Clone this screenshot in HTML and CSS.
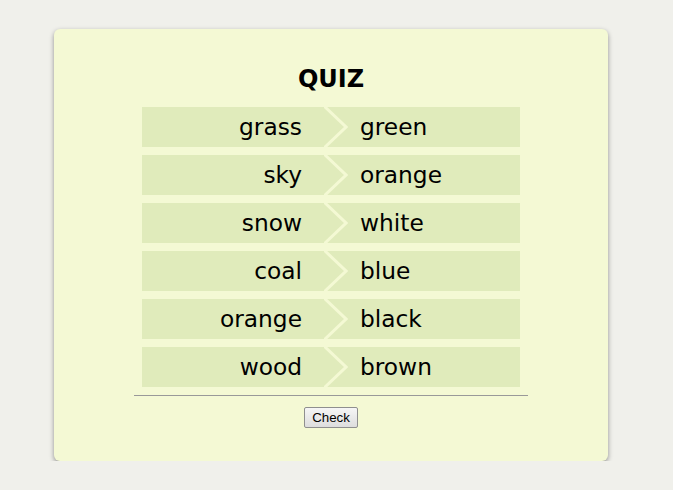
FILE: index.html
```html
<!DOCTYPE html>
<html>
<head>
<meta charset="utf-8">
<link rel="stylesheet" href="styles.css">
</head>
<body>
<div class="card">
  <h1 class="title">QUIZ</h1>
  <div class="rows">
    <div class="row"><span class="left">grass</span><svg class="chev" width="24" height="40" viewBox="0 0 24 40"><polyline points="0,-1 22,20 0,41" /></svg><span class="right">green</span></div>
    <div class="row"><span class="left">sky</span><svg class="chev" width="24" height="40" viewBox="0 0 24 40"><polyline points="0,-1 22,20 0,41" /></svg><span class="right">orange</span></div>
    <div class="row"><span class="left">snow</span><svg class="chev" width="24" height="40" viewBox="0 0 24 40"><polyline points="0,-1 22,20 0,41" /></svg><span class="right">white</span></div>
    <div class="row"><span class="left">coal</span><svg class="chev" width="24" height="40" viewBox="0 0 24 40"><polyline points="0,-1 22,20 0,41" /></svg><span class="right">blue</span></div>
    <div class="row"><span class="left">orange</span><svg class="chev" width="24" height="40" viewBox="0 0 24 40"><polyline points="0,-1 22,20 0,41" /></svg><span class="right">black</span></div>
    <div class="row"><span class="left">wood</span><svg class="chev" width="24" height="40" viewBox="0 0 24 40"><polyline points="0,-1 22,20 0,41" /></svg><span class="right">brown</span></div>
  </div>
  <hr class="rule">
  <div class="actions"><button class="check">Check</button></div>
</div>
</body>
</html>
```
FILE: styles.css
```css
html, body {
  margin: 0;
  padding: 0;
  background: #f0f0eb;
}
body {
  padding: 29px 0 0 54px;
  font-family: "DejaVu Sans", sans-serif;
}
.card {
  width: 554px;
  height: 432px;
  box-sizing: border-box;
  background: #f4f9d4;
  border-radius: 6px;
  box-shadow: 0 2px 5px rgba(0, 0, 0, 0.4);
  padding-top: 35px;
}
.title {
  margin: 0;
  font-size: 24px;
  font-weight: bold;
  line-height: 30px;
  text-align: center;
  color: #000;
  height: 43px;
}
.rows {
  width: 378px;
  margin: 0 auto;
  display: flex;
  flex-direction: column;
  gap: 8px;
}
.row {
  display: flex;
  height: 40px;
  background: #e0ebbb;
  font-size: 23.3px;
  line-height: 40px;
  color: #000;
}
.left {
  width: 160px;
  padding-right: 22px;
  text-align: right;
}
.chev {
  flex: none;
  display: block;
}
.chev polyline {
  fill: none;
  stroke: #f4f9d4;
  stroke-width: 3;
}
.right {
  padding-left: 12px;
}
.rule {
  width: 394px;
  margin: 8px auto 0;
  border: 0;
  border-top: 1px solid #999;
  height: 0;
}
.actions {
  text-align: center;
  margin-top: 11px;
}
.check {
  font-family: "Liberation Sans", Arial, sans-serif;
  font-size: 13.3px;
  height: 21px;
  padding: 0 7px;
  border: 1px solid #8f8f8f;
  border-radius: 2px;
  background: linear-gradient(#f6f6f6, #dddddd);
  color: #000;
}
```
